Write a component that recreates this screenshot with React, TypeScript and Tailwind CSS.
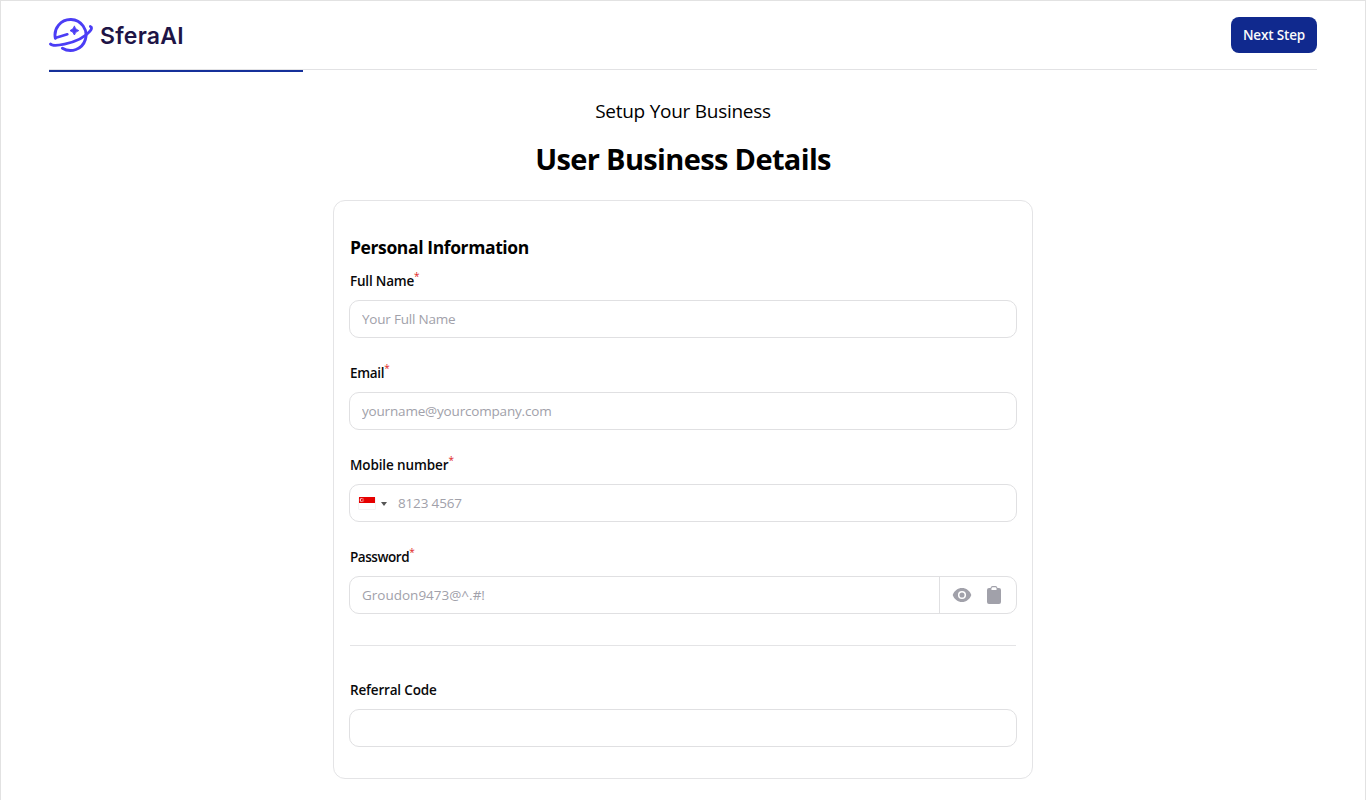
import type { ReactNode } from "react";

function Logo() {
  return (
    <div className="flex items-center">
      <svg width="45" height="36" viewBox="0 0 45 36" fill="none" stroke="#4b3df5" strokeLinecap="round" strokeLinejoin="round">
        <path d="M6.400 21.400A15.500 15.500 0 1 1 13.400 31.200" strokeWidth="2.900" />
        <path d="M1.500 27C3 28.800 10 28.300 15.500 27.200C26 25 36 20.300 41 14.200C43.200 11.500 42.800 9.900 41.400 9.500" strokeWidth="2.800" />
        <path d="M6.800 20.800C11 19.600 14.500 18.500 18.300 17.300" strokeWidth="2.700" />
        <path d="M25.400 9.300Q26.200 12.600 29.800 13.600Q26.200 14.600 25.400 18Q24.400 14.600 21 13.600Q24.400 12.600 25.400 9.300Z" fill="#4b3df5" strokeWidth="0.900" />
      </svg>
      <span className="ml-[6px] mt-0.5 font-['Inter',sans-serif] text-[23px] font-semibold leading-7 tracking-[0.250px] text-[#1e1446]">SferaAI</span>
    </div>
  );
}

function Field({ label, labelClass, required, children }: { label: string; labelClass: string; required?: boolean; children: ReactNode }) {
  return (
    <div>
      <div className="flex h-5 items-start pl-px text-[13.5px] font-semibold leading-5 text-[#09090b]">
        <span className={labelClass}>{label}</span>
        {required && <span className="-mt-[5px] text-[10px] font-normal leading-5 text-[#e02424]">*</span>}
      </div>
      <div className="mt-[9px] flex h-[38px] items-stretch overflow-hidden rounded-[10px] border border-[#e0e0e2]">
        {children}
      </div>
    </div>
  );
}

const inputBase = "min-w-0 flex-1 bg-transparent text-[13.5px] outline-none placeholder:text-[#a1a1aa]";

function Flag() {
  return (
    <svg width="18" height="13" viewBox="0 0 18 13">
      <rect x="0.500" y="0.500" width="17" height="12" rx="0.500" fill="#fff" stroke="#f4f4f5" />
      <rect x="1" y="0" width="16" height="6" fill="#e60000" />
      <circle cx="3.600" cy="3" r="1.900" fill="#fff" fillOpacity="0.800" />
      <circle cx="4.400" cy="3" r="1.600" fill="#e60000" />
      <path d="M4.800 2h.7M4.300 3.200h.7M5.400 3.200h.7M4.700 4.400h.6" stroke="#fff" strokeWidth="0.600" />
    </svg>
  );
}

export default function App() {
  return (
    <div className="h-[800px] overflow-hidden border-x border-t border-[#e2e2e2] bg-white px-12 font-['Open_Sans','Noto_Sans',sans-serif] text-black">
      <header className="flex h-[69px] items-center justify-between border-b border-[#e2e2e4]">
        <Logo />
        <button className="h-9 w-[86px] rounded-lg bg-[#10298e] text-[13.5px] font-semibold tracking-[-0.150px] text-[#fafafa]">Next Step</button>
      </header>
      <div className="h-0.5 w-1/5 bg-[#15309a]" />

      <main className="mx-auto w-[700px]">
        <p className="mt-[25px] text-center text-[19px] leading-7 tracking-[-0.260px]">Setup Your Business</p>
        <h1 className="mt-4 text-center text-[29px] font-bold leading-9 tracking-[-0.650px]">User Business Details</h1>

        <section className="mt-[23px] h-[579px] rounded-xl border border-[#e4e4e6] px-[15px] pt-8">
          <h2 className="pl-px text-[17.5px] font-bold leading-7 tracking-[-0.390px]">Personal Information</h2>
          <div className="mt-[10px] flex flex-col gap-[25px]">
            <Field label="Full Name" labelClass="tracking-[-0.200px]" required>
              <input className={`${inputBase} px-3 tracking-[-0.200px]`} placeholder="Your Full Name" />
            </Field>
            <Field label="Email" labelClass="tracking-[-0.300px]" required>
              <input className={`${inputBase} px-3 tracking-[-0.180px]`} placeholder="yourname@yourcompany.com" />
            </Field>
            <Field label="Mobile number" labelClass="tracking-[-0.120px]" required>
              <div className="flex w-12 items-center pl-2 pt-px">
                <Flag />
                <svg className="ml-[5px]" width="6" height="4" viewBox="0 0 6 4"><path d="M0 0h6L3 4z" fill="#555" /></svg>
              </div>
              <input className={`${inputBase} tracking-[-0.160px]`} placeholder="8123 4567" />
            </Field>
            <Field label="Password" labelClass="tracking-[-0.450px]" required>
              <input className={`${inputBase} px-3`} placeholder="Groudon9473@^.#!" />
              <div className="flex w-[77px] items-center border-l border-[#e0e0e2] pl-3">
                <svg width="20" height="20" viewBox="0 0 20 20" fill="#a1a1aa">
                  <path d="M10 3C5.800 3 2.200 5.700.700 10C2.200 14.300 5.800 17 10 17s7.800-2.700 9.300-7C17.800 5.700 14.200 3 10 3Z" />
                  <circle cx="10" cy="10" r="3.300" fill="none" stroke="#fff" strokeWidth="1.500" />
                </svg>
                <svg className="ml-[15px]" width="14" height="18" viewBox="0 0 14 18" fill="#a1a1aa">
                  <path fillRule="evenodd" d="M2 2h1.500Q4 0 5.500 0h3Q10 0 10.500 2H12q2 0 2 2v12q0 2-2 2H2q-2 0-2-2V4q0-2 2-2ZM5.500 1.200Q4.500 1.400 4.300 3.200Q4.300 4 5 4H9Q9.700 4 9.700 3.200Q9.500 1.400 8.500 1.200Z" />
                </svg>
              </div>
            </Field>
          </div>
          <div className="mx-px mt-[31px] border-t border-[#e4e4e6]" />
          <div className="mt-[34px]">
            <Field label="Referral Code" labelClass="tracking-[-0.170px]">
              <input className={`${inputBase} px-3`} aria-label="Referral Code" />
            </Field>
          </div>
        </section>
      </main>
    </div>
  );
}
